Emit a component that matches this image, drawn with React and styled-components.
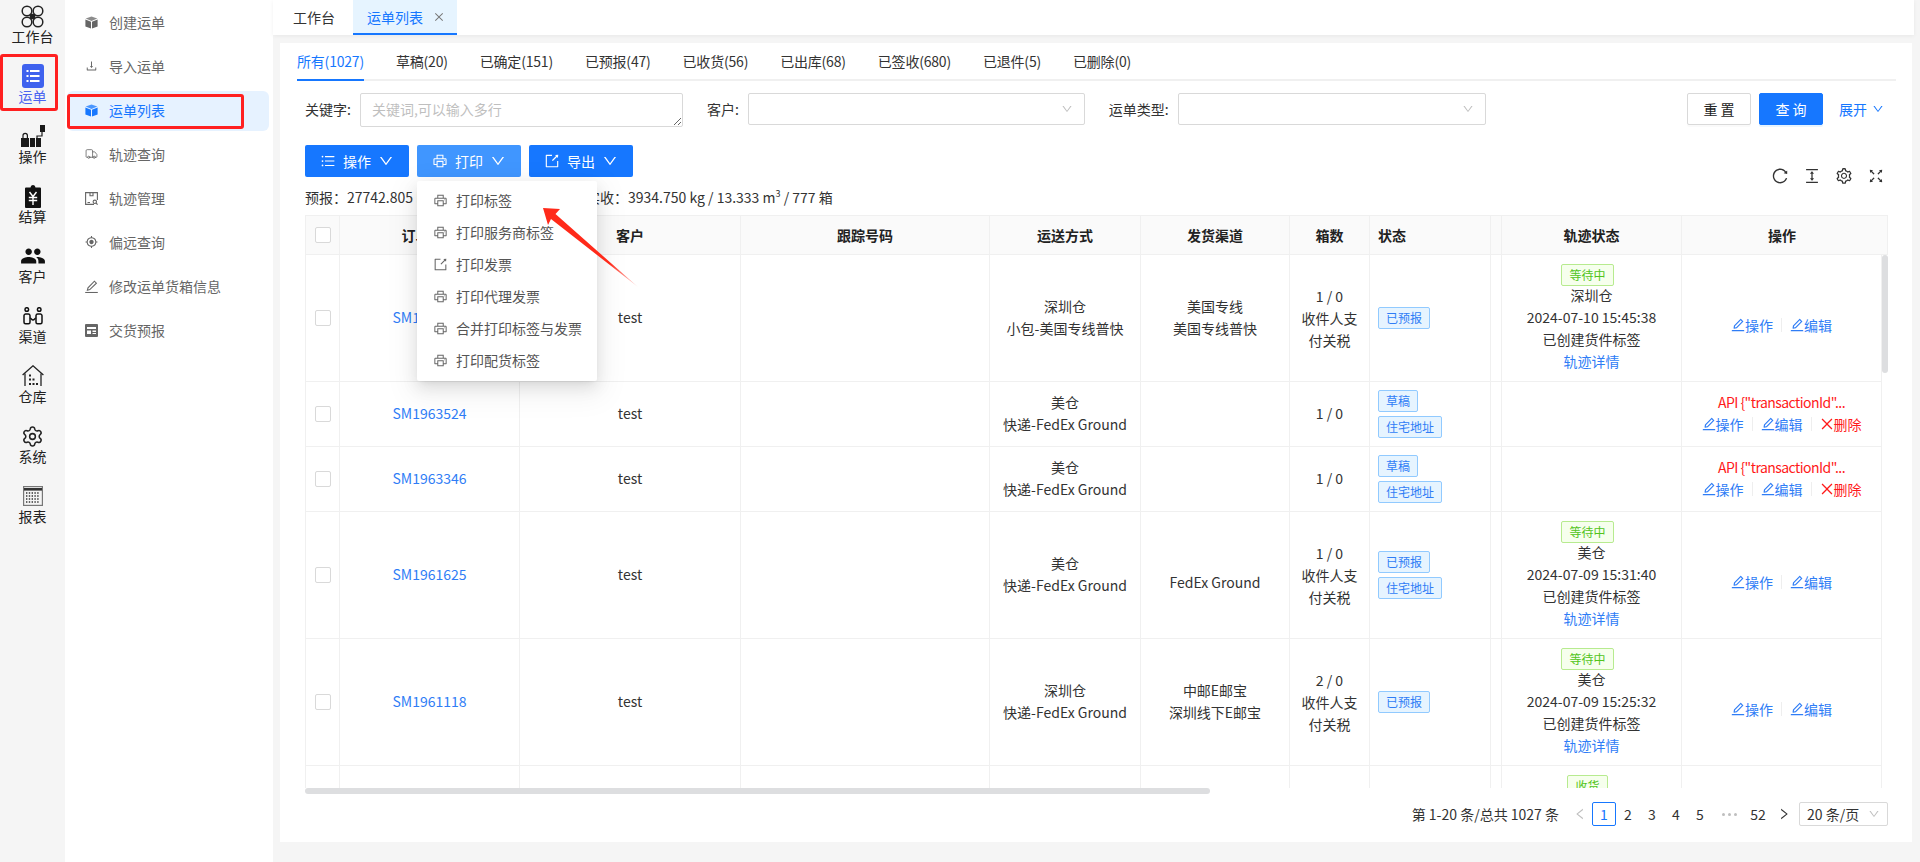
import React from 'react';
import styled, { createGlobalStyle } from 'styled-components';
import {
  AiOutlineClose, AiOutlineColumnHeight, AiOutlineDown, AiOutlineDownload, AiOutlineEdit,
  AiOutlineExport, AiOutlineFullscreen, AiOutlineLeft, AiOutlinePrinter, AiOutlineReload,
  AiOutlineRight, AiOutlineSetting, AiOutlineUnorderedList,
} from 'react-icons/ai';
import { MdGpsFixed, MdPeople } from 'react-icons/md';
import { Settings, Truck } from 'lucide-react';

const BLUE = '#1677ff';
const LINE = '#f0f0f0';

const GlobalStyle = createGlobalStyle`
  html, body { margin: 0; padding: 0; height: 100%; background: #f5f5f5; overflow: hidden; }
  body { font-family: "Noto Sans CJK SC", "Liberation Sans", sans-serif; font-size: 14px; line-height: 22px; color: #333; }
  *, *::before, *::after { box-sizing: border-box; }
`;

const Page = styled.div`
  display: flex;
  height: 862px;
  position: relative;
  overflow: hidden;
`;

/* left icon rail */
const Rail = styled.nav`
  width: 65px;
  flex: none;
  background: #f5f5f5;
  display: flex;
  flex-direction: column;
`;

const RailItem = styled.div`
  position: relative;
  height: 60px;
  padding-top: 4px;
  display: flex;
  flex-direction: column;
  align-items: center;
  color: ${p => (p.$active ? '#4a64f0' : '#222')};

  ${p => p.$active && `
    &::after {
      content: '';
      position: absolute;
      top: -6px;
      left: 0;
      width: 58px;
      height: 57px;
      border: 3px solid #ff2020;
      border-radius: 3px;
    }
  `}
`;

const RailIcon = styled.div`
  height: 24px;
  display: flex;
  align-items: center;
  justify-content: center;
`;

const RailLabel = styled.span`
  margin-top: -1px;
  line-height: 18px;
  white-space: nowrap;
`;

const SubNav = styled.nav`
  width: 208px;
  flex: none;
  background: #fff;
  padding-top: 3px;
  display: flex;
  flex-direction: column;
  gap: 4px;
`;

const SubItem = styled.div`
  position: relative;
  height: 40px;
  margin: 0 4px 0 2px;
  padding: 0 0 2px 18px;
  display: flex;
  align-items: center;
  gap: 11px;
  border-radius: 6px;
  color: ${p => (p.$active ? BLUE : '#666')};
  background: ${p => (p.$active ? '#e6f2ff' : 'transparent')};

  ${p => p.$active && `
    &::after {
      content: '';
      position: absolute;
      top: 3px;
      left: 0;
      width: 177px;
      height: 35px;
      border: 3px solid #ff2020;
      border-radius: 3px;
    }
  `}
`;

const SubIcon = styled.span`
  width: 13px;
  height: 13px;
  flex: none;
  display: flex;
  align-items: center;
  justify-content: center;
`;

/* main area */
const Main = styled.main`
  flex: 1;
  min-width: 0;
  display: flex;
  flex-direction: column;
  padding-bottom: 20px;
`;

const TopBar = styled.div`
  height: 35px;
  flex: none;
  margin-right: 6px;
  background: #fff;
  display: flex;
  box-shadow: 0 1px 4px rgba(0, 0, 0, 0.06);
`;

const PageTab = styled.div`
  height: 35px;
  display: flex;
  align-items: center;
  gap: 10px;
  padding: ${p => (p.$active ? '0 12px 0 14px' : '0 18px 0 20px')};
  color: ${p => (p.$active ? BLUE : '#333')};
  background: ${p => (p.$active ? '#e6f4ff' : 'transparent')};
  border-bottom: 2px solid ${p => (p.$active ? BLUE : 'transparent')};

  svg { color: #777; }
`;

const Card = styled.section`
  flex: 1;
  min-height: 0;
  margin: 8px 8px 0 7px;
  padding: 0 16px 0 17px;
  background: #fff;
  display: flex;
  flex-direction: column;
`;

const StatusTabs = styled.div`
  height: 38px;
  flex: none;
  display: flex;
  gap: 32px;
  border-bottom: 2px solid ${LINE};
`;

const StatusTab = styled.div`
  height: 38px;
  line-height: 36px;
  letter-spacing: -0.2px;
  color: ${p => (p.$active ? BLUE : '#333')};
  border-bottom: 2px solid ${p => (p.$active ? BLUE : 'transparent')};
  white-space: nowrap;
`;

const FilterRow = styled.div`
  display: flex;
  align-items: flex-start;
  gap: 24px;
  padding: 12px 8px 0;
  flex: none;
`;

const Field = styled.div`
  display: flex;
  align-items: flex-start;
  gap: 9px;
`;

const FieldLabel = styled.label`
  line-height: 32px;
  white-space: nowrap;
`;

const KeywordInput = styled.textarea`
  display: block;
  width: 323px;
  height: 34px;
  padding: 4px 11px;
  border: 1px solid #d9d9d9;
  border-radius: 2px;
  font: inherit;
  line-height: 22px;
  color: #333;
  outline: none;

  &::placeholder { color: #bfbfbf; }
`;

const SelectBox = styled.div`
  width: ${p => p.$width}px;
  height: 32px;
  padding-right: 11px;
  border: 1px solid #d9d9d9;
  border-radius: 2px;
  display: flex;
  align-items: center;
  justify-content: flex-end;
  color: #bfbfbf;
`;

const FilterActions = styled.div`
  margin-left: auto;
  display: flex;
  align-items: center;
  gap: 8px;
`;

const FilterButton = styled.button`
  width: 64px;
  height: 32px;
  padding: 0;
  border: 1px solid ${p => (p.$primary ? BLUE : '#d9d9d9')};
  border-radius: 2px;
  font: inherit;
  line-height: 30px;
  color: ${p => (p.$primary ? '#fff' : '#222')};
  background: ${p => (p.$primary ? BLUE : '#fff')};
  box-shadow: 0 2px 0 ${p => (p.$primary ? 'rgba(5, 145, 255, 0.1)' : 'rgba(0, 0, 0, 0.02)')};
`;

const ExpandLink = styled.span`
  margin-left: 8px;
  width: 49px;
  display: flex;
  align-items: center;
  gap: 5px;
  color: ${BLUE};
  white-space: nowrap;
`;

const TableTop = styled.div`
  display: flex;
  justify-content: space-between;
  align-items: flex-start;
  padding: 18px 11px 0 8px;
  height: 88px;
  flex: none;
`;

const ActionRow = styled.div`
  display: flex;
  gap: 8px;
`;

const ActionWrap = styled.div`
  position: relative;
`;

const ActionButton = styled.button`
  width: 104px;
  height: 32px;
  padding: 0;
  border: none;
  border-radius: 2px;
  font: inherit;
  color: #fff;
  background: ${p => (p.$hover ? '#4096ff' : BLUE)};
  display: flex;
  align-items: center;
  justify-content: center;
  gap: 7px;
`;

const Summary = styled.div`
  margin-top: 9px;
  line-height: 22px;
  white-space: nowrap;

  sup { font-size: 9px; line-height: 0; }
`;

const PlannedPart = styled.span`
  display: inline-block;
  width: 281px;
  overflow: hidden;
  vertical-align: top;
`;

const ToolIcons = styled.div`
  margin-top: 22px;
  display: flex;
  gap: 14px;
  color: #333;
`;

const Dropdown = styled.div`
  position: absolute;
  top: 36px;
  left: 0;
  z-index: 5;
  width: 180px;
  padding: 4px 0;
  background: #fff;
  border-radius: 2px;
  box-shadow: 0 6px 16px rgba(0, 0, 0, 0.1), 0 3px 6px -4px rgba(0, 0, 0, 0.12), 0 9px 28px 8px rgba(0, 0, 0, 0.05);
`;

const DropItem = styled.div`
  height: 32px;
  padding: 0 0 2px 16px;
  display: flex;
  align-items: center;
  gap: 8px;
  color: #555;
  white-space: nowrap;

  svg { color: #666; flex: none; }
`;

const PointerArrow = styled.svg`
  position: absolute;
  left: 540px;
  top: 205px;
  z-index: 6;
  pointer-events: none;
`;

/* table */
const TableWrap = styled.div`
  position: relative;
  height: 579px;
  margin: 0 8px;
  flex: none;
`;

const TableClip = styled.div`
  height: 573px;
  overflow: hidden;
`;

const Grid = styled.table`
  width: 1583px;
  table-layout: fixed;
  border-collapse: separate;
  border-spacing: 0;
`;

const HeadCell = styled.th`
  height: 40px;
  padding: 0 8px;
  font-weight: 600;
  color: #222;
  background: #fafafa;
  text-align: ${p => p.$align || 'center'};
  border-top: 1px solid ${LINE};
  border-bottom: 1px solid ${LINE};
  border-right: 1px solid ${LINE};

  &:first-child { border-left: 1px solid ${LINE}; }
  &:nth-last-child(2) { border-right: none; }
`;

const BodyCell = styled.td`
  padding: 8px;
  text-align: ${p => p.$align || 'center'};
  vertical-align: middle;
  line-height: 22px;
  border-bottom: 1px solid ${LINE};
  border-right: 1px solid ${LINE};

  &:first-child { border-left: 1px solid ${LINE}; }
`;

const ScrollCell = styled.td`
  padding: 0;
`;

const Checkbox = styled.span`
  display: block;
  width: 16px;
  height: 16px;
  margin: 0 auto;
  background: #fff;
  border: 1px solid #d9d9d9;
  border-radius: 2px;
`;

const OrderLink = styled.div`
  line-height: 20px;
  padding-bottom: 2px;
  color: #2f7df6;
`;

const TextLine = styled.div`
  line-height: 20px;
  min-height: 22px;
  padding-bottom: 2px;
`;

const WrappedLine = styled.div`
  line-height: 22px;
  margin-top: -1px;
`;

const Spacer = styled.div`
  height: 16px;
`;

const TagStack = styled.div`
  display: flex;
  flex-direction: column;
  align-items: flex-start;
  gap: 4px;
`;

const Tag = styled.span`
  display: inline-block;
  height: 22px;
  padding: 0 7px;
  border: 1px solid ${p => (p.$green ? '#b7eb8f' : '#91caff')};
  border-radius: 2px;
  font-size: 12px;
  line-height: 20px;
  white-space: nowrap;
  color: ${p => (p.$green ? '#52c41a' : '#2f7df6')};
  background: ${p => (p.$green ? '#f6ffed' : '#e6f4ff')};
`;

const TrackTagLine = styled.div`
  height: 22px;

  ${Tag} { margin-right: 8px; }
`;

const TrackLink = styled.div`
  line-height: 20px;
  padding-bottom: 2px;
  color: #2f7df6;
`;

const ErrorLine = styled.div`
  line-height: 20px;
  padding-bottom: 2px;
  color: #ff1a1a;
  letter-spacing: -0.55px;
  white-space: nowrap;
`;

const OpRow = styled.div`
  display: flex;
  align-items: center;
  justify-content: center;
  height: 22px;
  line-height: 20px;
  padding-bottom: 2px;
`;

const OpLink = styled.span`
  display: inline-flex;
  align-items: center;
  color: ${p => (p.$danger ? '#ff1a1a' : '#2f7df6')};
  white-space: nowrap;

  svg { margin: 0 -1px; }
`;

const OpDivider = styled.i`
  width: 1px;
  height: 14px;
  margin: 0 8px;
  background: #eee;
`;

const VerticalThumb = styled.div`
  position: absolute;
  right: 0;
  top: 40px;
  width: 6px;
  height: 118px;
  border-radius: 3px;
  background: #dddee0;
`;

const HorizontalThumb = styled.div`
  position: absolute;
  left: 0;
  bottom: 0;
  width: 905px;
  height: 6px;
  border-radius: 3px;
  background: #dddee0;
`;

/* pagination */
const Pager = styled.div`
  margin: 8px 8px 0;
  height: 24px;
  flex: none;
  display: flex;
  justify-content: flex-end;
  align-items: center;
`;

const PagerTotal = styled.span`
  margin-right: 9px;
  white-space: nowrap;
`;

const PagerItem = styled.span`
  width: ${p => p.$width || 24}px;
  height: 24px;
  display: flex;
  align-items: center;
  justify-content: center;
  line-height: 22px;
  border: 1px solid ${p => (p.$active ? BLUE : 'transparent')};
  border-radius: 2px;
  color: ${p => (p.$active ? BLUE : p.$muted ? '#bfbfbf' : '#333')};
`;

const PagerDots = styled.span`
  width: 34px;
  height: 24px;
  display: flex;
  align-items: center;
  justify-content: center;
  gap: 3px;

  i {
    width: 3px;
    height: 3px;
    border-radius: 50%;
    background: #bfbfbf;
  }
`;

const PagerSelect = styled.div`
  width: 89px;
  height: 24px;
  margin-left: 2px;
  padding: 0 7px;
  border: 1px solid #d9d9d9;
  border-radius: 2px;
  display: flex;
  align-items: center;
  justify-content: space-between;
  white-space: nowrap;

  svg { color: #bfbfbf; }
`;

const BoxIcon = () => (
  <svg width="13" height="13" viewBox="0 0 13 13" fill="currentColor">
    <path d="M6.5.4 12.3 2.6 6.5 4.9.7 2.6z" opacity=".75" />
    <path d="M.4 3.5 6 5.7v6.9L.4 10.4zM12.6 3.5 7 5.7v6.9l5.6-2.2z" />
  </svg>
);

const TrackManageIcon = () => (
  <svg width="13" height="13" viewBox="0 0 13 13" fill="none" stroke="currentColor" strokeWidth="1.1">
    <path d="M9 12.4H.6V.6h11.8V8" />
    <path d="M5 .8v3h3v-3M2.5 10.5h2.5" />
    <circle cx="9.8" cy="9.8" r="1.7" />
    <path d="m11 11 1.6 1.6" />
  </svg>
);

const PenLineIcon = () => (
  <svg width="13" height="13" viewBox="0 0 13 13" fill="none" stroke="currentColor" strokeWidth="1.1">
    <path d="M.2 12.5h12.6" />
    <path d="M2.4 10.2 3 7.8 9.4 1.2l2 2-6.6 6.4z" />
  </svg>
);

const PanelIcon = () => (
  <svg width="13" height="13" viewBox="0 0 13 13" fill="currentColor">
    <path fillRule="evenodd" d="M1 0h11a1 1 0 0 1 1 1v11a1 1 0 0 1-1 1H1a1 1 0 0 1-1-1V1a1 1 0 0 1 1-1zm1 3v2h9V3zm0 3.5V10h4V6.500zm5.500 0V8H11V6.500zm0 2.500v1H11V9z" />
  </svg>
);

const CloverIcon = () => (
  <svg width="23" height="23" viewBox="0 0 23 23" fill="none" stroke="#222" strokeWidth="1.5">
    <circle cx="6" cy="6" r="4.8" />
    <circle cx="17" cy="6" r="4.8" />
    <circle cx="6" cy="17" r="4.8" />
    <circle cx="17" cy="17" r="4.8" />
    <path d="M9.500 9.500h4v4h-4z" fill="#222" />
  </svg>
);

const ListBadgeIcon = () => (
  <svg width="22" height="24" viewBox="0 0 22 24">
    <rect width="22" height="24" rx="3" fill="#3f62ee" />
    <path d="M4.500 6h2v2h-2zM8 6h9.500v2H8zM4.500 11h2v2h-2zM8 11h9.500v2H8zM4.500 16h2v2h-2zM8 16h9.500v2H8z" fill="#fff" />
  </svg>
);

const OperateIcon = () => (
  <svg width="24" height="22" viewBox="0 0 24 22" fill="#1a1a1a">
    <rect x="19" y="0" width="5" height="7" />
    <path d="M21 7v4h-5v4" fill="none" stroke="#1a1a1a" strokeWidth="1.200" />
    <rect x="0" y="13" width="8" height="9" />
    <rect x="9" y="13" width="5" height="9" />
    <rect x="15" y="13" width="5" height="9" />
    <path d="M2 13v-2.500a2.200 2.200 0 0 1 4.400 0V13" fill="none" stroke="#1a1a1a" strokeWidth="1.200" />
  </svg>
);

const BillIcon = () => (
  <svg width="16" height="23" viewBox="0 0 16 23" fill="#111">
    <path d="M5.500 2.500C5.800.800 7 0 8 0s2.200.8 2.500 2.500H15a1 1 0 0 1 1 1V22a1 1 0 0 1-1 1H1a1 1 0 0 1-1-1V3.500a1 1 0 0 1 1-1z" />
    <path d="m4.500 7 3.500 4.500L11.500 7M3.800 12.500h8.400M3.800 15.500h8.400M8 11.500V20" fill="none" stroke="#fff" strokeWidth="1.400" />
  </svg>
);

const ChannelIcon = () => (
  <svg width="20" height="18" viewBox="0 0 20 18" fill="none" stroke="#111" strokeWidth="1.500">
    <circle cx="3.800" cy="2.500" r="1.800" />
    <circle cx="16.200" cy="2.500" r="1.800" />
    <path d="M7 11V8.500A1.700 1.700 0 0 0 5.300 7H2.500A1.700 1.700 0 0 0 1 8.500v6.800c0 .9.600 1.500 1.500 1.500h3c.9 0 1.500-.6 1.500-1.500z" />
    <path d="M13 11V8.500A1.700 1.700 0 0 1 14.700 7h2.800A1.700 1.700 0 0 1 19 8.500v6.800c0 .9-.6 1.500-1.500 1.500h-3c-.9 0-1.500-.6-1.500-1.500z" />
    <path d="M7 11.500c1-.8 1.500 1.500 3 1.500s2-2.300 3-1.500" />
  </svg>
);

const WarehouseIcon = () => (
  <svg width="22" height="22" viewBox="0 0 22 22" fill="none" stroke="#222" strokeWidth="1.300">
    <path d="M.6 10 11 .8 21.400 10" />
    <path d="M3 8.500V21M19 8.500V21" />
    <path d="M7 9.500h2v2H7zM7 13.500h2v2H7zM10.500 13.500h2v2h-2zM7 18h2v2H7zM10.500 18h2v2h-2zM14 18h2v2h-2z" fill="#222" stroke="none" />
  </svg>
);

const CalendarIcon = () => (
  <svg width="20" height="20" viewBox="0 0 20 20" fill="none">
    <rect x=".6" y=".6" width="18.800" height="18.800" stroke="#777" strokeWidth="1.200" fill="#f5f5f5" />
    <path d="M1 2h18v2.600H1z" fill="#333" />
    <path d="M3 7h14M3 10h14M3 13h14M3 16h14" stroke="#333" strokeWidth="1.300" strokeDasharray="1.400 1.400" />
  </svg>
);

const railItems = [
  { label: '工作台', icon: <CloverIcon /> },
  { label: '运单', icon: <ListBadgeIcon />, active: true },
  { label: '操作', icon: <OperateIcon /> },
  { label: '结算', icon: <BillIcon /> },
  { label: '客户', icon: <MdPeople size={26} color="#111" /> },
  { label: '渠道', icon: <ChannelIcon /> },
  { label: '仓库', icon: <WarehouseIcon /> },
  { label: '系统', icon: <Settings size={23} color="#222" strokeWidth={1.6} /> },
  { label: '报表', icon: <CalendarIcon /> },
];

const subItems = [
  { label: '创建运单', icon: <BoxIcon /> },
  { label: '导入运单', icon: <AiOutlineDownload size={14} /> },
  { label: '运单列表', icon: <BoxIcon />, active: true },
  { label: '轨迹查询', icon: <Truck size={14} strokeWidth={1.5} /> },
  { label: '轨迹管理', icon: <TrackManageIcon /> },
  { label: '偏远查询', icon: <MdGpsFixed size={14} /> },
  { label: '修改运单货箱信息', icon: <PenLineIcon /> },
  { label: '交货预报', icon: <PanelIcon /> },
];

const statusTabs = ['所有(1027)', '草稿(20)', '已确定(151)', '已预报(47)', '已收货(56)', '已出库(68)', '已签收(680)', '已退件(5)', '已删除(0)'];

const printItems = [
  { label: '打印标签', icon: <AiOutlinePrinter size={15} /> },
  { label: '打印服务商标签', icon: <AiOutlinePrinter size={15} /> },
  { label: '打印发票', icon: <AiOutlineExport size={15} /> },
  { label: '打印代理发票', icon: <AiOutlinePrinter size={15} /> },
  { label: '合并打印标签与发票', icon: <AiOutlinePrinter size={15} /> },
  { label: '打印配货标签', icon: <AiOutlinePrinter size={15} /> },
];

const colWidths = [35, 180, 221, 249, 151, 149, 80, 121, 11, 180, 200, 6];

const headers = [
  { label: '订单编号' }, { label: '客户' }, { label: '跟踪号码' }, { label: '运送方式' },
  { label: '发货渠道' }, { label: '箱数' }, { label: '状态', align: 'left' }, { label: '' },
  { label: '轨迹状态' }, { label: '操作' },
];

const PAYER = '收件人支付关税';

const rows = [
  {
    id: 'SM1964028', method: ['深圳仓', '小包-美国专线普快'], channel: ['美国专线', '美国专线普快'],
    boxes: '1 / 0', payer: PAYER, tags: ['已预报'],
    track: { tag: '等待中', place: '深圳仓', time: '2024-07-10 15:45:38' },
  },
  {
    id: 'SM1963524', method: ['美仓', '快递-FedEx Ground'], channel: [],
    boxes: '1 / 0', tags: ['草稿', '住宅地址'], failed: true,
  },
  {
    id: 'SM1963346', method: ['美仓', '快递-FedEx Ground'], channel: [],
    boxes: '1 / 0', tags: ['草稿', '住宅地址'], failed: true,
  },
  {
    id: 'SM1961625', method: ['美仓', '快递-FedEx Ground'], channel: ['FedEx Ground'], channelOffset: true,
    boxes: '1 / 0', payer: PAYER, tags: ['已预报', '住宅地址'],
    track: { tag: '等待中', place: '美仓', time: '2024-07-09 15:31:40' },
  },
  {
    id: 'SM1961118', method: ['深圳仓', '快递-FedEx Ground'], channel: ['中邮E邮宝', '深圳线下E邮宝'],
    boxes: '2 / 0', payer: PAYER, tags: ['已预报'],
    track: { tag: '等待中', place: '美仓', time: '2024-07-09 15:25:32' },
  },
  {
    id: 'SM1960870', method: ['美仓', '快递-FedEx Ground'], channel: [],
    boxes: '1 / 0', payer: PAYER, tags: ['已收货'],
    track: { tag: '收货', place: '美仓', time: '2024-07-09 14:20:11' },
  },
];

const Row = ({ row }) => (
  <tr>
    <BodyCell><Checkbox /></BodyCell>
    <BodyCell><OrderLink>{row.id}</OrderLink></BodyCell>
    <BodyCell><TextLine>test</TextLine></BodyCell>
    <BodyCell />
    <BodyCell>
      {row.method.map(line => <TextLine key={line}>{line}</TextLine>)}
    </BodyCell>
    <BodyCell>
      {row.channelOffset && <Spacer />}
      {row.channel.map(line => <TextLine key={line}>{line}</TextLine>)}
    </BodyCell>
    <BodyCell>
      <TextLine>{row.boxes}</TextLine>
      {row.payer && <WrappedLine>{row.payer}</WrappedLine>}
    </BodyCell>
    <BodyCell $align="left">
      <TagStack>
        {row.tags.map(tag => <Tag key={tag}>{tag}</Tag>)}
      </TagStack>
    </BodyCell>
    <BodyCell />
    <BodyCell>
      {row.track && (
        <>
          <TrackTagLine><Tag $green>{row.track.tag}</Tag></TrackTagLine>
          <TextLine>{row.track.place}</TextLine>
          <TextLine>{row.track.time}</TextLine>
          <TextLine>已创建货件标签</TextLine>
          <TrackLink>轨迹详情</TrackLink>
        </>
      )}
    </BodyCell>
    <BodyCell>
      {row.failed ? <ErrorLine>API {'{"transactionId"...'}</ErrorLine> : <Spacer />}
      <OpRow>
        <OpLink><AiOutlineEdit size={16} />操作</OpLink>
        <OpDivider />
        <OpLink><AiOutlineEdit size={16} />编辑</OpLink>
        {row.failed && (
          <>
            <OpDivider />
            <OpLink $danger><AiOutlineClose size={16} />删除</OpLink>
          </>
        )}
      </OpRow>
    </BodyCell>
    <ScrollCell />
  </tr>
);

export default function App() {
  return (
    <Page>
      <GlobalStyle />
      <Rail>
        {railItems.map(item => (
          <RailItem key={item.label} $active={item.active}>
            <RailIcon>{item.icon}</RailIcon>
            <RailLabel>{item.label}</RailLabel>
          </RailItem>
        ))}
      </Rail>
      <SubNav>
        {subItems.map(item => (
          <SubItem key={item.label} $active={item.active}>
            <SubIcon>{item.icon}</SubIcon>
            {item.label}
          </SubItem>
        ))}
      </SubNav>
      <Main>
        <TopBar>
          <PageTab>工作台</PageTab>
          <PageTab $active>运单列表<AiOutlineClose size={12} /></PageTab>
        </TopBar>
        <Card>
          <StatusTabs>
            {statusTabs.map((tab, i) => <StatusTab key={tab} $active={i === 0}>{tab}</StatusTab>)}
          </StatusTabs>
          <FilterRow>
            <Field>
              <FieldLabel>关键字:</FieldLabel>
              <KeywordInput placeholder="关键词,可以输入多行" />
            </Field>
            <Field>
              <FieldLabel>客户:</FieldLabel>
              <SelectBox $width={337}><AiOutlineDown size={12} /></SelectBox>
            </Field>
            <Field>
              <FieldLabel>运单类型:</FieldLabel>
              <SelectBox $width={308}><AiOutlineDown size={12} /></SelectBox>
            </Field>
            <FilterActions>
              <FilterButton>重 置</FilterButton>
              <FilterButton $primary>查 询</FilterButton>
              <ExpandLink>展开<AiOutlineDown size={12} /></ExpandLink>
            </FilterActions>
          </FilterRow>
          <TableTop>
            <div>
              <ActionRow>
                <ActionWrap>
                  <ActionButton><AiOutlineUnorderedList size={16} />操作<AiOutlineDown size={16} /></ActionButton>
                </ActionWrap>
                <ActionWrap>
                  <ActionButton $hover><AiOutlinePrinter size={16} />打印<AiOutlineDown size={16} /></ActionButton>
                  <Dropdown>
                    {printItems.map(item => <DropItem key={item.label}>{item.icon}{item.label}</DropItem>)}
                  </Dropdown>
                </ActionWrap>
                <ActionWrap>
                  <ActionButton><AiOutlineExport size={16} />导出<AiOutlineDown size={16} /></ActionButton>
                </ActionWrap>
              </ActionRow>
              <Summary>
                <PlannedPart>预报：27742.805 kg / 96.120 m³ / 3120 箱</PlannedPart>
                实收：3934.750 kg / 13.333 m<sup>3</sup> / 777 箱
              </Summary>
            </div>
            <ToolIcons>
              <AiOutlineReload size={18} />
              <AiOutlineColumnHeight size={18} />
              <AiOutlineSetting size={18} />
              <AiOutlineFullscreen size={18} />
            </ToolIcons>
          </TableTop>
          <TableWrap>
            <TableClip>
              <Grid>
                <colgroup>
                  {colWidths.map((w, i) => <col key={i} width={w} />)}
                </colgroup>
                <thead>
                  <tr>
                    <HeadCell><Checkbox /></HeadCell>
                    {headers.map((h, i) => <HeadCell key={i} $align={h.align}>{h.label}</HeadCell>)}
                    <HeadCell />
                  </tr>
                </thead>
                <tbody>
                  {rows.map(row => <Row key={row.id} row={row} />)}
                </tbody>
              </Grid>
            </TableClip>
            <VerticalThumb />
            <HorizontalThumb />
          </TableWrap>
          <Pager>
            <PagerTotal>第 1-20 条/总共 1027 条</PagerTotal>
            <PagerItem $muted><AiOutlineLeft size={14} /></PagerItem>
            <PagerItem $active>1</PagerItem>
            <PagerItem>2</PagerItem>
            <PagerItem>3</PagerItem>
            <PagerItem>4</PagerItem>
            <PagerItem>5</PagerItem>
            <PagerDots><i /><i /><i /></PagerDots>
            <PagerItem>52</PagerItem>
            <PagerItem $width={27}><AiOutlineRight size={14} /></PagerItem>
            <PagerSelect>20 条/页<AiOutlineDown size={12} /></PagerSelect>
          </Pager>
        </Card>
      </Main>
      <PointerArrow width="100" height="85" viewBox="0 0 100 85">
        <defs>
          <linearGradient id="arrowFade" x1="0" y1="0" x2="1" y2="1">
            <stop offset="0" stopColor="#ff2a1a" />
            <stop offset="0.7" stopColor="#ff2a1a" />
            <stop offset="1" stopColor="#ff2a1a" stopOpacity="0.15" />
          </linearGradient>
        </defs>
        <polygon points="3,3 20,4 15.500,9 98,82 11,14 8,20" fill="url(#arrowFade)" />
      </PointerArrow>
    </Page>
  );
}
